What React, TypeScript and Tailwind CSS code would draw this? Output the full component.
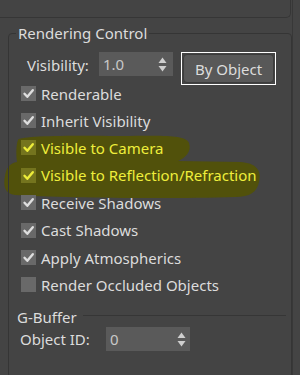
import React from "react";

const Check = ({ hl }: { hl?: boolean }) => (
  <svg width="15" height="15" viewBox="0 0 15 15" className="block">
    <rect x="0" y="0" width="15" height="15" fill={hl ? "#74741e" : "#696969"} />
    <path d="M3.5 7.8 L6.3 10.8 L11.8 4.2" fill="none" stroke={hl ? "#ecec3a" : "#dedede"} strokeWidth="2.4" strokeLinecap="round" strokeLinejoin="round" />
  </svg>
);

const Empty = () => <div className="w-[15px] h-[15px] bg-[#696969]" />;

const Arrows = () => (
  <svg width="9" height="15" viewBox="0 0 9 15" className="block">
    <path d="M4.5 0.5 L8.5 6 L0.5 6 Z" fill="#cfcfcf" />
    <path d="M4.5 14.5 L8.5 9 L0.5 9 Z" fill="#cfcfcf" />
  </svg>
);

const Row = ({ label, checked = true, hl, tall }: { label: string; checked?: boolean; hl?: boolean; tall?: boolean }) => (
  <div className={(tall ? "h-[28px]" : "h-[27px]") + " flex items-center pl-[12px] gap-[5px]"}>
    {checked ? <Check hl={hl} /> : <Empty />}
    <span className={hl ? "text-[#eeee3c]" : "text-[#dcdcdc]"}>{label}</span>
  </div>
);

export default function App() {
  return (
    <div
      className="w-[300px] h-[375px] bg-[#444444] relative overflow-hidden text-[15px] leading-[20px]"
      style={{ fontFamily: '"Noto Sans", "Open Sans", sans-serif' }}
    >
      <svg className="absolute left-0 top-0" width="300" height="375" viewBox="0 0 300 375">
        <path
          d="M18 140 C 18 136, 60 135, 120 136 C 160 136, 185 134, 189 143 C 192 152, 185 158, 178 161 L 240 162 C 256 163, 262 170, 259 182 C 257 192, 250 197, 235 197 C 170 199, 60 198, 15 195 C 5 194, 3 186, 5 176 C 6 168, 10 163, 17 162 C 16 155, 16 145, 18 140 Z"
          fill="#51510b"
        />
      </svg>
      <div className="w-[291px] h-[18px] border-b border-r border-[#363636] rounded-br-[5px]" />
      <div className="absolute left-[292px] top-0 w-px h-[375px] bg-[#383838]" />
      <fieldset className="ml-[8px] mt-[5px] w-[284px] h-[355px] border border-[#353535] rounded-[4px] relative z-10">
        <legend className="ml-[7px] px-[2px] text-[#dcdcdc]">Rendering Control</legend>
        <div className="flex items-start h-[33px] mt-[9px]">
          <span className="ml-[18px] mt-[3px] w-[72px] text-[#dcdcdc]">Visibility:</span>
          <div className="w-[74px] h-[24px] bg-[#5a5a5a] flex items-center justify-between pl-[4px] pr-[6px]">
            <span className="text-[#c8c8c8]">1.0</span>
            <Arrows />
          </div>
          <div className="ml-[8px] w-[95px] h-[33px] border border-white p-px">
            <div className="w-full h-full rounded-[4px] bg-[#585858] border border-[#3c3c3c] flex items-center justify-center text-[#dcdcdc]">
              By Object
            </div>
          </div>
        </div>
        <div className="mt-[-5px]">
          <Row label="Renderable" />
          <Row label="Inherit Visibility" />
          <Row label="Visible to Camera" hl />
          <Row label="Visible to Reflection/Refraction" hl tall />
          <Row label="Receive Shadows" />
          <Row label="Cast Shadows" tall />
          <Row label="Apply Atmospherics" />
          <Row label="Render Occluded Objects" checked={false} />
        </div>
        <div className="flex items-center mt-[9px] pl-[8px]">
          <span className="text-[#dcdcdc]">G-Buffer</span>
          <div className="flex-1 h-px bg-[#363636] ml-[6px] mr-[5px] mt-[-4px]" />
        </div>
        <div className="flex items-center mt-[0px] pl-[11px] h-[24px]">
          <span className="w-[86px] text-[#dcdcdc]">Object ID:</span>
          <div className="w-[84px] h-[24px] bg-[#5a5a5a] flex items-center justify-between pl-[4px] pr-[4px]">
            <span className="text-[#c8c8c8]">0</span>
            <Arrows />
          </div>
        </div>
      </fieldset>
    </div>
  );
}
